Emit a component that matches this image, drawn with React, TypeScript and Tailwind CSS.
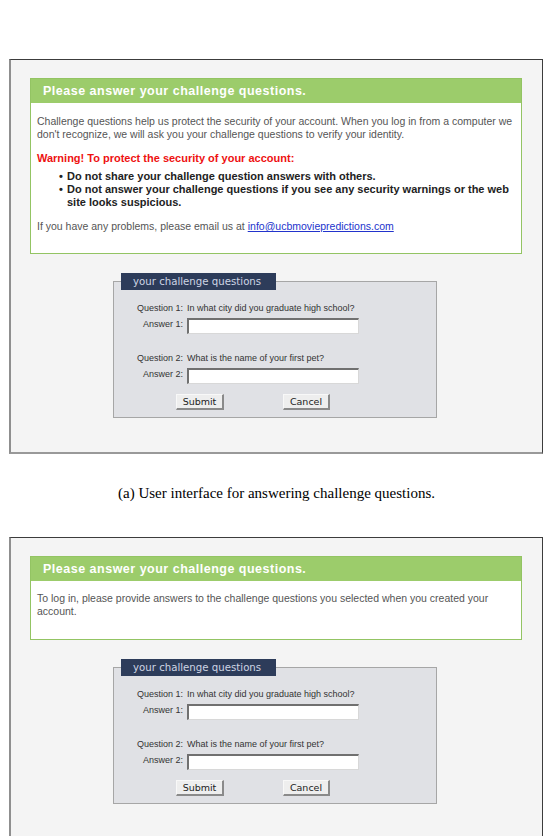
import { type ReactNode } from "react";

const sans = "font-['Liberation_Sans',Arial,sans-serif]";

function Frame({ children }: { children: ReactNode }) {
  return (
    <div className="ml-[9px] w-[534px] border-t border-r border-t-[#3c3c3c] border-r-[#3c3c3c] border-l-2 border-b-2 border-l-[#8f8f8f] border-b-[#999999] bg-[#f4f4f4] pt-[18px] pb-[34px]">
      {children}
    </div>
  );
}

function GreenBox({ children }: { children: ReactNode }) {
  return (
    <div className="ml-[19px] w-[492px] border border-[#93c463] bg-white">
      <div className="flex h-[24px] items-center bg-[#9ccc6b] pl-[12px]">
        <span className={`${sans} text-[12.5px] font-bold tracking-[0.5px] text-white`}>
          Please answer your challenge questions.
        </span>
      </div>
      <div className={`${sans} px-[6px] text-[10.5px] leading-[13px] text-[#555]`}>{children}</div>
    </div>
  );
}

function Row({ label, children }: { label: string; children: ReactNode }) {
  return (
    <div className="grid grid-cols-[73px_auto] items-start">
      <span className="pr-[4px] text-right">{label}</span>
      <div>{children}</div>
    </div>
  );
}

function Field() {
  return (
    <div className="h-[16px] w-[172px] border-t-2 border-l-2 border-t-[#707070] border-l-[#707070] border-r border-b border-r-[#d8d8d8] border-b-[#d8d8d8] bg-white" />
  );
}

function Btn({ label, w }: { label: string; w: string }) {
  return (
    <button
      className={`${w} h-[16px] border border-t-[#f8f8f8] border-l-[#f8f8f8] border-r-2 border-b-2 border-r-[#8a8a8a] border-b-[#8a8a8a] bg-[#eeeeee] font-['DejaVu_Sans',sans-serif] text-[9.5px] leading-none text-[#222]`}
    >
      {label}
    </button>
  );
}

function QuestionsBox() {
  return (
    <div className="ml-[102px] mt-[19px] w-[324px]">
      <div className="relative z-10 ml-[8px] flex h-[17px] w-[155px] items-center bg-[#2d3c5a] pl-[12px]">
        <span className="font-['DejaVu_Sans',sans-serif] text-[10.2px] text-[#cdd5e4]">
          your challenge questions
        </span>
      </div>
      <div className={`${sans} -mt-[9px] border border-[#a6a6a6] bg-[#e0e1e5] pt-[20px] pb-[7px] text-[9px] leading-[12px] text-[#333]`}>
        <Row label="Question 1:">In what city did you graduate high school?</Row>
        <div className="mt-[4px]">
          <Row label="Answer 1:">
            <Field />
          </Row>
        </div>
        <div className="mt-[18px]">
          <Row label="Question 2:">What is the name of your first pet?</Row>
        </div>
        <div className="mt-[4px]">
          <Row label="Answer 2:">
            <Field />
          </Row>
        </div>
        <div className="mt-[10px] flex">
          <div className="ml-[62px]">
            <Btn label="Submit" w="w-[48px]" />
          </div>
          <div className="ml-[59px]">
            <Btn label="Cancel" w="w-[47px]" />
          </div>
        </div>
      </div>
    </div>
  );
}

export default function App() {
  return (
    <div className="min-h-[836px] w-[553px] overflow-hidden bg-white pt-[59px]">
      <Frame>
        <GreenBox>
          <p className="whitespace-nowrap pt-[12px]">
            Challenge questions help us protect the security of your account. When you log in from a computer we
            <br />
            don't recognize, we will ask you your challenge questions to verify your identity.
          </p>
          <p className="mt-[11px] text-[11px] font-bold text-[#ee1111]">
            Warning! To protect the security of your account:
          </p>
          <ul className="mt-[5px] whitespace-nowrap pl-[22px] text-[11px] font-bold text-[#222]">
            <li className="flex">
              <span className="w-[8px] shrink-0">•</span>
              <span>Do not share your challenge question answers with others.</span>
            </li>
            <li className="flex">
              <span className="w-[8px] shrink-0">•</span>
              <span>
                Do not answer your challenge questions if you see any security warnings or the web
                <br />
                site looks suspicious.
              </span>
            </li>
          </ul>
          <p className="mt-[11px] pb-[20px]">
            If you have any problems, please email us at{" "}
            <a href="#" className="text-[#2233cc] underline">
              info@ucbmoviepredictions.com
            </a>
          </p>
        </GreenBox>
        <QuestionsBox />
      </Frame>

      <p className="mt-[30px] text-center font-['Liberation_Serif',serif] text-[15px] leading-[18px] text-black">
        (a) User interface for answering challenge questions.
      </p>

      <div className="mt-[35px]">
        <Frame>
          <GreenBox>
            <p className="pt-[11px] pb-[21px]">
              To log in, please provide answers to the challenge questions you selected when you created your
              <br />
              account.
            </p>
          </GreenBox>
          <QuestionsBox />
        </Frame>
      </div>
    </div>
  );
}
